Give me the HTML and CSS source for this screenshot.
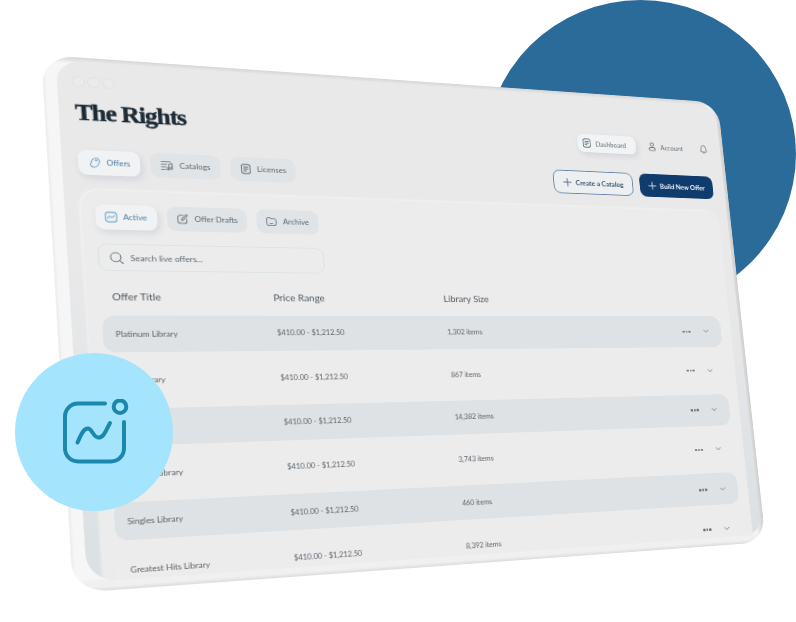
FILE: index.html
```html
<!DOCTYPE html>
<html lang="en">
<head>
<meta charset="utf-8">
<title>The Rights</title>
<link rel="stylesheet" href="styles.css">
</head>
<body>
<div class="stage">
  <div class="blob"></div>
  <div class="tablet">
    <div class="screen">
      <header class="topbar">
        <div class="brand">
          <div class="dots"><i></i><i></i><i></i></div>
          <div class="title">The Rights</div>
          <nav class="tabs">
            <a class="pill on w54"><svg class="ic" viewBox="0 0 12 12"><path d="M7.2 1C9.5 1 10.6 3 10.1 5.5 9.5 8.5 7 11 4.5 11 2.4 11 1.4 9.3 2 7.3 2.6 4.6 4.6 1 7.2 1Z"/><circle cx="7.2" cy="3.6" r=".7"/></svg>Offers</a>
            <a class="pill w64"><svg class="ic big" viewBox="0 0 14 12"><path d="M1 1.5H11M1 4.5H7M1 7.5H6M1 10.5H5M9 9.5V4.5L12.5 3.5V8.5"/><circle cx="8" cy="9.8" r="1.3"/><circle cx="11.4" cy="8.8" r="1.3"/></svg>Catalogs</a>
            <a class="pill w62"><svg class="ic" viewBox="0 0 12 12"><rect x="1.5" y=".8" width="9" height="10.4" rx="2.4"/><path d="M3.8 3.8H8.2M3.8 6H8.2M3.8 8.2H6.4"/></svg>Licenses</a>
          </nav>
        </div>
        <div class="side">
          <div class="nav">
            <a class="navpill"><svg class="ic" viewBox="0 0 12 12"><rect x="1.5" y=".8" width="9" height="10.4" rx="2.4"/><path d="M3.8 3.8H8.2M3.8 6H8.2M3.8 8.2H6.4"/></svg>Dashboard</a>
            <a class="navlink"><svg class="ic" viewBox="0 0 12 12"><circle cx="6" cy="3.2" r="2.2"/><path d="M3.6 11H8.4C9.6 11 10 10.2 10 9.4 10 7.8 8.4 6.8 6 6.8S2 7.8 2 9.4C2 10.2 2.4 11 3.6 11Z"/></svg>Account</a>
            <svg class="ic bell" viewBox="0 0 12 12"><path d="M6 1C3.9 1 3 2.6 3 4.6 3 6.6 2 7.2 2 8.2 2 8.9 2.6 9.2 3.4 9.2H8.6C9.4 9.2 10 8.9 10 8.2 10 7.2 9 6.6 9 4.6 9 2.6 8.1 1 6 1ZM4.8 10.8H7.2"/></svg>
          </div>
          <div class="actions">
            <a class="btn outline"><svg class="plus" viewBox="0 0 10 10"><path d="M5 .8V9.2M.8 5H9.2"/></svg>Create a Catalog</a>
            <a class="btn solid"><svg class="plus" viewBox="0 0 10 10"><path d="M5 .8V9.2M.8 5H9.2"/></svg>Build New Offer</a>
          </div>
        </div>
      </header>
      <section class="card">
        <div class="subtabs">
          <a class="pill on w54"><svg class="ic" viewBox="0 0 12 12"><rect x=".8" y=".8" width="10.4" height="10.4" rx="2.4"/><path d="M2.8 7.4C3.6 5.6 4.2 4.8 4.9 5.2 5.6 5.7 5.9 6.8 6.8 6.4 7.7 6 8.2 5 9.2 4.4"/></svg>Active</a>
          <a class="pill w73"><svg class="ic big" viewBox="0 0 13 13"><path d="M7 1.8H4.2C2.4 1.8 1.2 3 1.2 4.8V8.8C1.2 10.6 2.4 11.8 4.2 11.8H7.8C9.6 11.8 10.8 10.6 10.8 8.8V6.4"/><path d="M5.2 8.2 5.6 5.8 10.2 1.2C10.8.7 11.8 1.6 11.4 2.4L6.9 7.6Z"/></svg>Offer Drafts</a>
          <a class="pill w59"><svg class="ic big" viewBox="0 0 13 13"><path d="M1.4 3.4C1.4 2.2 2.2 1.6 3.2 1.6H4.4C5.4 1.6 5.6 3 6.6 3H9.6C10.8 3 11.6 3.8 11.6 5V9.2C11.6 10.6 10.8 11.4 9.4 11.4H3.6C2.2 11.4 1.4 10.6 1.4 9.2ZM5 8.8H8"/></svg>Archive</a>
        </div>
        <label class="search"><svg class="lens" viewBox="0 0 14 14"><circle cx="6" cy="6" r="5"/><path d="M9.8 9.8 13 13"/></svg>Search live offers...</label>
        <div class="row head"><span>Offer Title</span><span>Price Range</span><span>Library Size</span></div>
        <div class="rows">
          <div class="row item fill"><span>Platinum Library</span><span>$410.00 - $1,212.50</span><span>1,302 items</span><span class="more"><b></b><b></b><b></b></span><svg class="chev" viewBox="0 0 8 5"><path d="M1 1 4 4 7 1"/></svg></div>
          <div class="row item"><span>Gold Library</span><span>$410.00 - $1,212.50</span><span>867 items</span><span class="more"><b></b><b></b><b></b></span><svg class="chev" viewBox="0 0 8 5"><path d="M1 1 4 4 7 1"/></svg></div>
          <div class="row item fill"><span>Silver Library</span><span>$410.00 - $1,212.50</span><span>14,382 items</span><span class="more"><b></b><b></b><b></b></span><svg class="chev" viewBox="0 0 8 5"><path d="M1 1 4 4 7 1"/></svg></div>
          <div class="row item"><span>Classics Library</span><span>$410.00 - $1,212.50</span><span>3,743 items</span><span class="more"><b></b><b></b><b></b></span><svg class="chev" viewBox="0 0 8 5"><path d="M1 1 4 4 7 1"/></svg></div>
          <div class="row item fill"><span>Singles Library</span><span>$410.00 - $1,212.50</span><span>460 items</span><span class="more"><b></b><b></b><b></b></span><svg class="chev" viewBox="0 0 8 5"><path d="M1 1 4 4 7 1"/></svg></div>
          <div class="row item"><span>Greatest Hits Library</span><span>$410.00 - $1,212.50</span><span>8,392 items</span><span class="more"><b></b><b></b><b></b></span><svg class="chev" viewBox="0 0 8 5"><path d="M1 1 4 4 7 1"/></svg></div>
        </div>
      </section>
    </div>
  </div>
  <div class="badge">
    <svg class="badge-ic" viewBox="0 0 72 72"><path d="M45 4.5H18A13 13 0 0 0 5 17.5V49.5A13 13 0 0 0 18 62.5H51A13 13 0 0 0 64 49.5V23"/><circle cx="60" cy="7.7" r="6.3"/><path d="M17.5 43.5C21 36 23 29.5 28 29.5 32 29.5 33 38 38 38.5 44 39 46 31 50 24"/></svg>
  </div>
</div>
</body>
</html>
```
FILE: styles.css
```css
* { box-sizing: border-box; }
html, body { margin: 0; background: #fff; }
.stage {
  position: relative;
  width: 796px;
  height: 622px;
  overflow: hidden;
  font-family: Lato, "Liberation Sans", sans-serif;
}
.blob {
  position: absolute;
  left: 485px;
  top: 0;
  width: 311px;
  height: 308px;
  border-radius: 50%;
  background: #2b6b9a;
}
.tablet {
  position: absolute;
  left: 0;
  top: 0;
  width: 700px;
  height: 520px;
  padding: 4px 4px 9px 12px;
  border-radius: 28px;
  overflow: hidden;
  transform-origin: 0 0;
  transform: matrix3d(1.19186, 0.10033, 0, 0.00031406, 0.05575, 0.99115, 0, -0.00007394, 0, 0, 1, 0, 41.3, 54.8, 0, 1);
  filter: blur(.3px);
  background:
    linear-gradient(180deg, #d6d6d6 0, #e6e6e6 4px, transparent 6px, transparent 508px, #f0f0f0 511px, #f0f0f0 516px, #dcdcdc 520px),
    linear-gradient(90deg, #ebebeb 0, #f6f6f6 3px, #f5f5f5 690px, #cdcdcd 700px);
}
.screen {
  height: 100%;
  display: flex;
  flex-direction: column;
  padding: 15px 0 0 14px;
  border-radius: 22px 20px 20px 26px;
  overflow: hidden;
  background: linear-gradient(180deg, #e9e9ea 0, #e9e9ea 38%, #dbe0e3 100%);
}
.topbar {
  display: flex;
  justify-content: space-between;
  margin-right: 14px;
  height: 99px;
  flex: none;
}
.brand { display: flex; flex-direction: column; }
.dots { display: flex; gap: 2.5px; height: 10.5px; margin-left: -1px; }
.dots i {
  width: 10.5px;
  height: 10.5px;
  border-radius: 50%;
  border: 1px solid #e1e1e1;
  background: #ebebeb;
}
.title {
  margin-top: 14.5px;
  height: 24px;
  line-height: 24px;
  font-family: "Liberation Serif", serif;
  font-weight: 700;
  font-size: 23px;
  letter-spacing: -1px;
  color: #1b2a34;
  -webkit-text-stroke: .4px #1b2a34;
  white-space: nowrap;
}
.tabs, .subtabs { display: flex; gap: 9px; }
.tabs { margin-top: 25px; }
.pill {
  display: flex;
  align-items: center;
  justify-content: center;
  gap: 5px;
  height: 25px;
  border-radius: 8px;
  background: #e1e4e7;
  color: #5c6870;
  font-size: 7.5px;
  white-space: nowrap;
}
.pill.on {
  background: #f1f2f3;
  color: #4a7ba0;
  box-shadow: 2px 3px 6px rgba(120, 135, 150, .2);
}
.w54 { width: 54px; }
.w59 { width: 59px; }
.w62 { width: 62px; }
.w64 { width: 64px; }
.w73 { width: 73px; }
.ic {
  width: 11px;
  height: 11px;
  flex: none;
  fill: none;
  stroke: #5c6870;
  stroke-width: .9;
  stroke-linecap: round;
  stroke-linejoin: round;
}
.ic.big { width: 12px; height: 11px; }
.pill.on .ic { stroke: #5a9cc4; }
.side {
  display: flex;
  flex-direction: column;
  align-items: flex-end;
  padding-top: 29px;
}
.nav { display: flex; align-items: center; height: 21px; padding-right: 1px; }
.navpill {
  display: flex;
  align-items: center;
  gap: 4px;
  width: 68px;
  height: 21px;
  padding-left: 5px;
  border-radius: 7px;
  background: #f2f3f4;
  color: #66727a;
  font-size: 7.6px;
  box-shadow: 2px 3px 6px rgba(120, 135, 150, .2);
}
.navlink {
  display: flex;
  align-items: center;
  gap: 4px;
  margin-left: 14px;
  color: #66727a;
  font-size: 7.6px;
}
.bell { margin-left: 20px; }
.actions { display: flex; gap: 8px; margin-top: 22px; }
.btn {
  display: flex;
  align-items: center;
  justify-content: center;
  gap: 4px;
  height: 27px;
  border-radius: 8px;
  font-size: 7.6px;
  font-weight: 700;
  white-space: nowrap;
}
.plus { width: 10px; height: 10px; fill: none; stroke: currentColor; stroke-width: .9; stroke-linecap: round; }
.outline { width: 92px; border: 1px solid #6585a9; color: #3b5672; background: #eeeff0; }
.solid { width: 89px; background: #0f3c6c; color: #f4f6f8; }
.card {
  flex: 1;
  min-height: 0;
  margin: 15px 11px 0 0;
  padding: 14px 12px 0 11.5px;
  border-radius: 16px 16px 0 0;
  overflow: hidden;
  background: #ececec;
  box-shadow: -1px -1px 3px rgba(255, 255, 255, .5);
}
.subtabs { height: 25px; }
.search {
  display: flex;
  align-items: center;
  gap: 6px;
  width: 207px;
  height: 27px;
  margin-top: 14.3px;
  padding-left: 9px;
  border: 1px solid #dce3e6;
  border-radius: 8px;
  color: #5f6a72;
  font-size: 7.9px;
}
.lens {
  width: 12.5px;
  height: 12.5px;
  fill: none;
  stroke: #5f6a72;
  stroke-width: 1;
  stroke-linecap: round;
}
.row {
  display: grid;
  grid-template-columns: 145.5px 168.5px 1fr 23px 24px;
  align-items: center;
  padding: 0 5.5px 0 10.5px;
}
.head {
  height: 14px;
  margin-top: 18.7px;
  font-size: 9.5px;
  color: #50585e;
}
.rows { display: flex; flex-direction: column; gap: 9.4px; margin-top: 10.8px; }
.item {
  flex: none;
  height: 36px;
  border-radius: 11px;
  border: 1px solid #eeeeee;
  font-size: 7.1px;
  color: #5b6268;
}
.item span:first-child { font-size: 7.6px; }
.fill { background: #dee2e5; border-color: #dee2e5; }
.more { display: flex; gap: 1px; justify-content: center; }
.more b { width: 2.5px; height: 2.5px; border-radius: 50%; background: #6b7379; }
.chev {
  width: 7px;
  height: 5px;
  justify-self: center;
  fill: none;
  stroke: #6b7379;
  stroke-width: 1;
  stroke-linecap: round;
  stroke-linejoin: round;
}
.badge {
  position: absolute;
  left: 15px;
  top: 353px;
  width: 158px;
  height: 158px;
  display: flex;
  align-items: center;
  justify-content: center;
  border-radius: 50%;
  background: #a5e4fd;
}
.badge-ic {
  width: 72px;
  height: 72px;
  margin: 5px 0 0 4px;
  fill: none;
  stroke: #1a87ad;
  stroke-width: 4;
  stroke-linecap: round;
  stroke-linejoin: round;
}
```
